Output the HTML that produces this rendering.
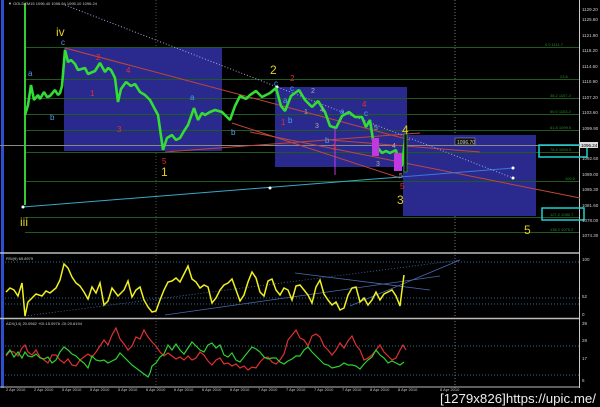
<!DOCTYPE html>
<html><head><meta charset="utf-8"><style>
html,body{margin:0;padding:0;background:#000;width:600px;height:407px;overflow:hidden}
svg{display:block}
text{font-family:"Liberation Sans",sans-serif}
</style></head><body>
<svg width="600" height="407" viewBox="0 0 600 407" xmlns="http://www.w3.org/2000/svg">
<rect width="600" height="407" fill="#000"/>
<rect x="1" y="0" width="3" height="388" fill="#2d4fd0"/>
<line x1="579.5" y1="0" x2="579.5" y2="388" stroke="#ccc" stroke-width="1"/>
<line x1="156" y1="0" x2="156" y2="388" stroke="#555" stroke-dasharray="1,2"/>
<line x1="455" y1="0" x2="455" y2="388" stroke="#777" stroke-dasharray="1,2"/>
<rect x="64" y="48" width="158" height="103" fill="#2a2a8e"/>
<rect x="275" y="87" width="132" height="80" fill="#2a2a8e"/>
<rect x="403" y="135" width="133" height="81" fill="#2a2a8e"/>
<g stroke="#1f5a1f" stroke-width="1">
<line x1="25" y1="47.5" x2="579" y2="47.5"/>
<line x1="25" y1="79.5" x2="579" y2="79.5"/>
<line x1="25" y1="98.5" x2="579" y2="98.5"/>
<line x1="25" y1="114.5" x2="579" y2="114.5"/>
<line x1="25" y1="130.5" x2="579" y2="130.5"/>
<line x1="25" y1="152.5" x2="579" y2="152.5"/>
<line x1="25" y1="181.5" x2="579" y2="181.5"/>
<line x1="25" y1="217.5" x2="579" y2="217.5"/>
<line x1="25" y1="232.5" x2="579" y2="232.5"/>
</g>
<line x1="0" y1="145.5" x2="579" y2="145.5" stroke="#888" stroke-width="1"/>
<g font-size="4" fill="#2a8a2a">
<text x="545" y="46">0.0 1111.7</text><text x="560" y="78">23.6</text>
<text x="550" y="97">38.2 1107.2</text><text x="550" y="113">50.0 1103.2</text>
<text x="550" y="129">61.8 1099.5</text><text x="550" y="151">76.4 1094.3</text>
<text x="565" y="180">100.0</text><text x="550" y="216">127.2 1080.7</text>
<text x="550" y="231">138.2 1075.2</text>
</g>
<rect x="539" y="145" width="48" height="12" fill="none" stroke="#1fd0d0" stroke-width="1.5"/>
<rect x="542" y="208" width="42" height="12" fill="none" stroke="#1fd0d0" stroke-width="1.5"/>
<line x1="65" y1="48" x2="410" y2="140" stroke="#c0463a" stroke-width="1"/>
<line x1="165" y1="152" x2="420" y2="133" stroke="#c0463a" stroke-width="1"/>
<line x1="232" y1="123" x2="400" y2="178" stroke="#c0463a" stroke-width="1"/>
<line x1="250" y1="132" x2="580" y2="198" stroke="#c0463a" stroke-width="1"/>
<line x1="330" y1="140" x2="480" y2="152" stroke="#c0463a" stroke-width="1"/>
<line x1="23" y1="207" x2="400" y2="177" stroke="#3aa8c8" stroke-width="1"/>
<line x1="400" y1="177" x2="513" y2="168" stroke="#3a78d8" stroke-width="1"/>
<line x1="65" y1="5" x2="513" y2="178" stroke="#9ad" stroke-width="1" stroke-dasharray="1,2"/>
<circle cx="270" cy="188" r="1.5" fill="#fff"/><circle cx="23" cy="207" r="1.5" fill="#fff"/>
<circle cx="513" cy="168" r="1.5" fill="#fff"/><circle cx="513" cy="178" r="1.5" fill="#fff"/>
<circle cx="277" cy="87" r="1.5" fill="#fff"/>
<line x1="25" y1="3" x2="25" y2="205" stroke="#3c3" stroke-width="2"/>
<polyline fill="none" stroke="#3d3" stroke-width="2.6" stroke-linejoin="bevel" points="25,115 28,105 31,85 34,100 38,95 40,99 44,92 47,97 50,96 55,90 58,95 60,93 62,86 65,50 68,62 71,60 75,64 78,70 85,68 88,74 95,71 100,63 105,72 108,68 111,70 115,78 118,102 121,89 126,82 131,86 135,84 140,92 145,95 150,100 158,115 163,150 167,138 172,135 176,140 180,138 184,131 188,125 194,108 198,120 202,113 205,115 210,112 215,110 222,112 226,116 230,120 235,106 240,96 246,99 250,95 256,91 262,97 270,93 276,88 281,106 285,111 291,96 295,93 299,90 305,100 312,107 318,101 325,112 330,126 336,128 342,116 349,112 355,117 362,117 366,127 370,120 373,140 378,148 382,153 386,151 390,153 396,150 398,160 402,166 405,140"/>
<rect x="372" y="138" width="7" height="18" fill="#c038e0"/>
<rect x="394" y="153" width="8" height="18" fill="#c038e0"/>
<line x1="335" y1="128" x2="335" y2="175" stroke="#c038e0"/>
<rect x="404" y="134" width="3" height="38" fill="#111" stroke="#3d3" stroke-width="0.5"/>
<rect x="455" y="138" width="20" height="7" fill="#111" stroke="#aaa" stroke-width="0.5"/>
<text x="457" y="144" font-size="5" fill="#ccc">1096.70</text>
<g font-size="12" fill="#e0d020"><text x="56" y="36">iv</text><text x="20" y="226">iii</text><text x="161" y="176">1</text><text x="270" y="74">2</text><text x="397" y="204">3</text><text x="402" y="134">4</text><text x="524" y="234">5</text></g>
<g font-size="8" fill="#e03030"><text x="96" y="60">2</text><text x="126" y="73">4</text><text x="90" y="96">1</text><text x="117" y="132">3</text><text x="162" y="164">5</text><text x="290" y="81">2</text><text x="281" y="125">1</text><text x="362" y="107">4</text><text x="332" y="150">3</text><text x="400" y="189">5</text></g>
<g font-size="8" fill="#4aa0f0"><text x="61" y="45">c</text><text x="28" y="76">a</text><text x="50" y="120">b</text><text x="190" y="100">a</text><text x="231" y="135">b</text><text x="274" y="86">c</text><text x="283" y="103">a</text><text x="288" y="123">b</text><text x="290" y="91">c</text><text x="340" y="114">a</text><text x="325" y="143">b</text><text x="364" y="116">c</text></g>
<g font-size="7" fill="#aaa"><text x="311" y="93">2</text><text x="304" y="114">1</text><text x="320" y="112">4</text><text x="315" y="128">3</text><text x="374" y="130">5</text><text x="392" y="148">4</text><text x="376" y="166">3</text><text x="399" y="178">5</text></g>
<text x="8" y="5" font-size="4" fill="#ccc">▼ GOLDZM15 1096.40 1096.64 1095.10 1096.24</text>
<g font-size="4.5" fill="#ccc">
<text x="582" y="11">1129.20</text><text x="582" y="21">1125.60</text><text x="582" y="37">1121.90</text><text x="582" y="52">1118.20</text><text x="582" y="68">1114.60</text><text x="582" y="83">1110.90</text><text x="582" y="99">1107.20</text><text x="582" y="114">1103.60</text><text x="582" y="130">1099.90</text><text x="582" y="160">1092.60</text><text x="582" y="176">1089.00</text><text x="582" y="191">1085.30</text><text x="582" y="207">1081.60</text><text x="582" y="222">1078.00</text><text x="582" y="237">1074.30</text>
<text x="582" y="261">100</text><text x="582" y="298">52</text><text x="582" y="316">0</text><text x="582" y="325">39</text><text x="582" y="342">28</text><text x="582" y="360">17</text><text x="582" y="382">6</text>
</g>
<rect x="580" y="142" width="18" height="6" fill="#ddd"/><text x="581" y="147" font-size="4.5" fill="#000">1096.24</text>
<line x1="0" y1="253" x2="579" y2="253" stroke="#bbb" stroke-width="1.5"/>
<line x1="0" y1="318.5" x2="579" y2="318.5" stroke="#bbb" stroke-width="1.5"/>
<text x="6" y="260" font-size="4" fill="#ccc">RSI(9) 65.8979</text>
<text x="6" y="325" font-size="4" fill="#ccc">ADX(14) 20.0562 +DI:15.0976 -DI:20.6194</text>
<g stroke="#2a6a9a" stroke-dasharray="1,2"><line x1="5" y1="262" x2="579" y2="262"/><line x1="5" y1="304" x2="579" y2="304"/><line x1="5" y1="346" x2="579" y2="346"/><line x1="5" y1="375" x2="579" y2="375"/></g>
<line x1="5" y1="298" x2="579" y2="298" stroke="#2a6a9a" stroke-dasharray="1,2"/>
<g stroke="#4a6ab0" stroke-width="0.8" fill="none">
<line x1="165" y1="315" x2="440" y2="276"/><line x1="295" y1="273" x2="430" y2="290"/><line x1="350" y1="306" x2="460" y2="260"/><line x1="25" y1="316" x2="460" y2="260" stroke-dasharray="1,2"/>
</g>
<polyline fill="none" stroke="#f0f020" stroke-width="1.5" points="6,292 10,288 14,290 18,296 22,283 25,316 28,302 32,298 36,294 42,296 46,291 50,293 56,288 60,280 64,264 68,268 72,277 76,283 80,286 84,292 88,299 92,287 96,293 100,283 104,305 108,301 112,288 118,296 124,290 128,281 132,297 136,290 140,287 144,300 148,307 152,312 156,311 160,300 164,290 168,282 172,281 176,278 180,282 184,274 188,266 192,279 196,282 200,288 204,285 208,287 212,303 216,298 220,290 224,285 228,283 232,279 236,290 240,301 244,295 248,282 252,272 256,278 260,292 264,296 268,281 272,279 276,290 280,295 284,288 288,290 292,300 296,286 300,285 304,290 308,295 312,303 316,287 320,280 324,294 328,300 332,305 336,302 340,310 344,308 348,295 352,288 356,287 360,302 364,298 368,305 372,300 376,292 380,300 384,294 388,292 392,290 396,296 400,306 402,290 404,275"/>
<polyline fill="none" stroke="#e03030" stroke-width="1.2" points="6,356 10,351 14,352 18,356 22,348 25,345 28,352 32,355 36,350 40,357 44,360 48,363 52,355 56,355 60,360 64,363 68,359 72,365 76,366 80,360 84,357 88,354 92,357 96,352 100,346 104,340 108,345 112,335 116,328 120,339 124,344 128,350 132,346 136,337 140,339 144,330 148,337 152,342 156,346 160,352 164,356 168,353 172,356 176,359 180,357 184,360 188,356 192,360 196,358 200,352 204,355 208,361 212,365 216,360 220,358 224,364 228,363 232,366 236,364 240,368 244,366 248,370 252,367 256,368 260,362 264,358 268,357 272,362 276,364 280,360 284,354 288,340 292,335 296,330 300,338 304,340 308,346 312,336 316,334 320,337 324,346 328,350 332,355 336,350 340,343 344,348 348,341 352,336 356,345 360,350 364,360 368,358 372,355 376,350 380,345 384,352 388,356 392,360 396,358 400,350 403,345 406,350"/>
<polyline fill="none" stroke="#30d030" stroke-width="1.2" points="6,355 10,350 14,357 18,352 22,358 25,352 28,356 32,357 36,354 40,358 44,359 48,357 52,363 56,360 60,352 64,347 68,350 72,354 76,356 80,360 84,363 88,368 92,356 96,360 100,361 104,360 108,363 112,361 116,359 120,353 124,357 128,361 132,365 136,368 140,371 144,374 148,377 150,373 152,366 156,363 160,357 164,354 168,345 172,350 176,344 180,350 184,354 188,348 192,342 196,346 200,350 204,352 208,345 212,343 216,348 220,345 224,355 228,357 232,353 236,360 240,362 244,357 248,352 252,347 256,349 260,352 264,357 268,359 272,358 276,358 280,362 284,364 288,361 292,359 296,356 300,356 304,350 308,347 312,352 316,356 320,360 324,364 328,365 332,368 336,367 340,366 344,363 348,365 352,365 356,366 360,369 364,364 368,360 372,357 376,350 380,355 384,358 388,363 392,361 396,363 400,365 404,362"/>
<line x1="0" y1="387" x2="579" y2="387" stroke="#bbb" stroke-width="1"/>
<g font-size="4" fill="#ccc"><text x="6" y="391">2 Apr 2010</text><text x="34" y="391">2 Apr 2010</text><text x="62" y="391">5 Apr 2010</text><text x="90" y="391">5 Apr 2010</text><text x="118" y="391">5 Apr 2010</text><text x="146" y="391">6 Apr 2010</text><text x="174" y="391">6 Apr 2010</text><text x="202" y="391">6 Apr 2010</text><text x="230" y="391">6 Apr 2010</text><text x="258" y="391">7 Apr 2010</text><text x="286" y="391">7 Apr 2010</text><text x="314" y="391">7 Apr 2010</text><text x="342" y="391">7 Apr 2010</text><text x="370" y="391">8 Apr 2010</text><text x="398" y="391">8 Apr 2010</text><text x="440" y="391">8 Apr 2010</text></g>
<text x="440" y="403" font-size="13" fill="#eee" textLength="156" lengthAdjust="spacingAndGlyphs">[1279x826]https://upic.me/</text>
</svg>
</body></html>
